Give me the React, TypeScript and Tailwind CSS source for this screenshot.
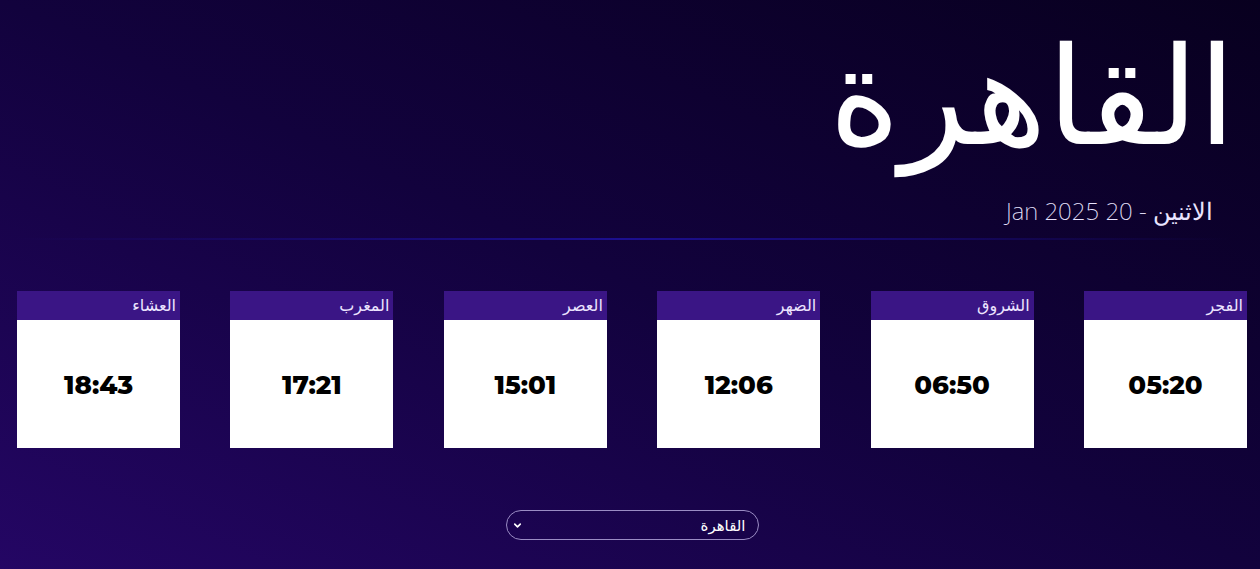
import { ChevronDown } from 'lucide-react';

const prayers = [
  { name: 'الفجر', time: '05:20' },
  { name: 'الشروق', time: '06:50' },
  { name: 'الضهر', time: '12:06' },
  { name: 'العصر', time: '15:01' },
  { name: 'المغرب', time: '17:21' },
  { name: 'العشاء', time: '18:43' },
];

function PrayerCard({ name, time }: { name: string; time: string }) {
  return (
    <div className="flex w-[163px] flex-col">
      <div className="h-[29px] bg-[#3a1585] px-[4px] pt-[1px] text-right text-[16px] leading-[26px] text-[#ece4ff]">
        {name}
      </div>
      <div className="flex h-[128px] items-center justify-center bg-white pt-[3px] font-['Montserrat','Lato',sans-serif] text-[26px] font-extrabold text-black" dir="ltr">
        {time}
      </div>
    </div>
  );
}

export default function App() {
  return (
    <div
      dir="rtl"
      className="h-[569px] w-full overflow-hidden bg-gradient-to-bl from-[#08001f] via-[#12023d] to-[#240664] font-['Noto_Sans','DejaVu_Sans',sans-serif] text-white"
    >
      <div className="flex flex-col">
        <h1 className="h-[196px] pr-[24px] pt-[2px] text-right text-[136px] font-light leading-[180px]">القاهرة</h1>
        <p className="pr-[47px] text-right text-[24px] font-extralight leading-[30px] text-[#e9e4ff]">
          الاثنين - 20 Jan 2025
        </p>
        <div className="ml-[15px] mr-[30px] mt-[12px] h-[2px] bg-gradient-to-l from-transparent via-[#1c0f8f] to-transparent" />

        <div className="mt-[51px] flex justify-between pl-[17px] pr-[13px]">
          {prayers.map((p) => (
            <PrayerCard key={p.name} name={p.name} time={p.time} />
          ))}
        </div>

        <div className="mt-[62px] flex justify-center pl-[4px]">
          <div className="flex h-[30px] w-[253px] items-center justify-between rounded-full border border-[#9a8cc4] pl-[5px] pr-[12px]">
            <span className="text-[15px] text-white">القاهرة</span>
            <ChevronDown className="h-[11px] w-[11px]" strokeWidth={3.5} />
          </div>
        </div>
      </div>
    </div>
  );
}
